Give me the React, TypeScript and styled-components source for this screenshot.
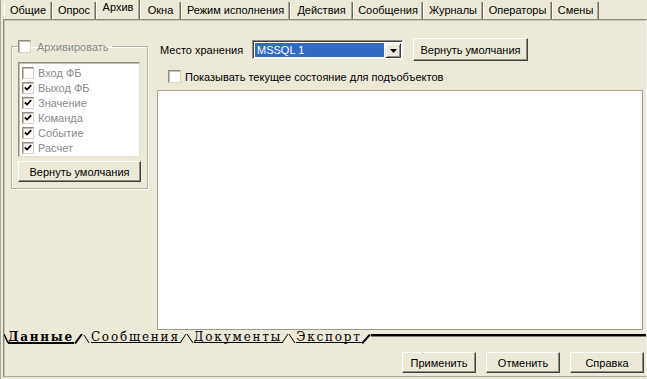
import React from 'react'
import styled, { createGlobalStyle } from 'styled-components'

const GlobalStyle = createGlobalStyle`
    html, body {
        margin: 0;
        padding: 0;
        background: #ece9d8;
    }
    body {
        font-family: "Liberation Sans", Arial, sans-serif;
        font-size: 11px;
        color: #000;
    }
`

const topTabs = [
    { label: 'Общие', width: 48 },
    { label: 'Опрос', width: 44 },
    { label: 'Архив', width: 44, active: true },
    { label: 'Окна', width: 41 },
    { label: 'Режим исполнения', width: 109 },
    { label: 'Действия', width: 63 },
    { label: 'Сообщения', width: 70 },
    { label: 'Журналы', width: 60 },
    { label: 'Операторы', width: 69 },
    { label: 'Смены', width: 47 },
]

const archiveItems = [
    { label: 'Вход ФБ', checked: false },
    { label: 'Выход ФБ', checked: true },
    { label: 'Значение', checked: true },
    { label: 'Команда', checked: true },
    { label: 'Событие', checked: true },
    { label: 'Расчет', checked: true },
]

function Tick() {
    return (
        <svg width="8" height="7" viewBox="0 0 8 7">
            <path d="M0.8 3.4 L3 5.6 L7.2 1.2" fill="none" stroke="#000" strokeWidth="1.7" />
        </svg>
    )
}

interface EdgeProps {
    width: number;
    lines: { x1: number; y1: number; x2: number; y2: number; w: number }[];
}

function TabEdge(props: EdgeProps): JSX.Element {
    return (
        <EdgeSvg width={props.width} height="10" viewBox={`0 0 ${props.width} 10`}>
            {props.lines.map((l, i) => (
                <line key={i} x1={l.x1} y1={l.y1} x2={l.x2} y2={l.y2} stroke="#000" strokeWidth={l.w} />
            ))}
        </EdgeSvg>
    )
}

export default function App(): JSX.Element {
    return (
        <Window>
            <GlobalStyle />
            <TabBar>
                {topTabs.map((t) => (
                    <Tab key={t.label} $width={t.width} $active={!!t.active}>
                        {t.label}
                    </Tab>
                ))}
            </TabBar>
            <Page>
                <Content>
                    <GroupBox>
                        <Legend>
                            <CheckBox $size={13} />
                            <DisabledLabel>Архивировать</DisabledLabel>
                        </Legend>
                        <ListBox>
                            {archiveItems.map((item) => (
                                <ListItem key={item.label}>
                                    <CheckBox $size={12}>{item.checked && <Tick />}</CheckBox>
                                    <DisabledLabel>{item.label}</DisabledLabel>
                                </ListItem>
                            ))}
                        </ListBox>
                        <Button $width={123} $height={21} $top={4}>
                            Вернуть умолчания
                        </Button>
                    </GroupBox>
                    <RightPanel>
                        <StorageRow>
                            <FieldLabel>Место хранения</FieldLabel>
                            <Select>
                                <SelectValue>MSSQL 1</SelectValue>
                                <DropButton>
                                    <svg width="7" height="4" viewBox="0 0 7 4">
                                        <path d="M0 0 H7 L3.5 4 Z" fill="#000" />
                                    </svg>
                                </DropButton>
                            </Select>
                            <Button $width={115} $height={23} $top={0} $left={10}>
                                Вернуть умолчания
                            </Button>
                        </StorageRow>
                        <OptionRow>
                            <CheckBox $size={13} />
                            <span>Показывать текущее состояние для подъобъектов</span>
                        </OptionRow>
                        <WhiteArea />
                    </RightPanel>
                </Content>
                <SheetTabs>
                    <TabEdge width={4} lines={[{ x1: 0, y1: 0, x2: 4, y2: 9, w: 1.4 }]} />
                    <SheetTab $active>Данные</SheetTab>
                    <TabEdge
                        width={17}
                        lines={[
                            { x1: 1, y1: 9.5, x2: 8, y2: 0, w: 2 },
                            { x1: 10, y1: 1, x2: 15, y2: 9, w: 1 },
                        ]}
                    />
                    <SheetTab>Сообщения</SheetTab>
                    <TabEdge
                        width={14}
                        lines={[
                            { x1: 0, y1: 9, x2: 6, y2: 0, w: 1 },
                            { x1: 7, y1: 0, x2: 13, y2: 9, w: 1 },
                        ]}
                    />
                    <SheetTab>Документы</SheetTab>
                    <TabEdge
                        width={14}
                        lines={[
                            { x1: 0, y1: 9, x2: 6, y2: 0, w: 1 },
                            { x1: 7, y1: 0, x2: 13, y2: 9, w: 1 },
                        ]}
                    />
                    <SheetTab>Экспорт</SheetTab>
                    <TabEdge width={9} lines={[{ x1: 0, y1: 9.5, x2: 8, y2: 0.5, w: 2 }]} />
                    <SheetFiller />
                </SheetTabs>
                <ButtonRow>
                    <Button $width={74} $height={21}>Применить</Button>
                    <Button $width={74} $height={21}>Отменить</Button>
                    <Button $width={74} $height={21}>Справка</Button>
                </ButtonRow>
            </Page>
        </Window>
    )
}

const Window = styled.div`
    width: 646px;
    height: 379px;
    border-left: 1px solid #aca899;
    background: #ece9d8;
    overflow: hidden;
`

const TabBar = styled.div`
    display: flex;
    height: 19px;
    padding-left: 3px;
    align-items: flex-end;
`

const Tab = styled.div<{ $width: number; $active: boolean }>`
    box-sizing: border-box;
    width: ${(p) => p.$width}px;
    height: ${(p) => (p.$active ? 19 : 17)}px;
    line-height: ${(p) => (p.$active ? 15 : 17)}px;
    text-align: center;
    white-space: nowrap;
    border-left: 1px solid #fff;
    border-right: 1px solid #716f64;
    box-shadow: inset -1px 0 0 #aca899;
`

const Page = styled.div`
    box-sizing: border-box;
    width: 644px;
    margin-left: 2px;
    display: flex;
    flex-direction: column;
    border-top: 1px solid #8b8878;
    border-left: 1px solid #8b8878;
    border-bottom: 1px solid #aca899;
    border-right: 1px solid #f7f6f0;
    box-shadow: inset 1px 1px 0 #c9c6b6;
`

const Content = styled.div`
    display: flex;
    align-items: flex-start;
    padding: 18px 0 0 7px;
`

const GroupBox = styled.fieldset`
    box-sizing: border-box;
    width: 137px;
    margin: 2px 0 0 0;
    padding: 0 6px 6px 6px;
    border: 1px solid #b5b2a2;
    box-shadow: inset 1px 1px 0 #fff, 1px 1px 0 #fff;
    min-width: 0;
`

const Legend = styled.legend`
    display: flex;
    align-items: center;
    gap: 6px;
    height: 13px;
    padding: 0 3px 0 0;
    margin: 0;
`

const DisabledLabel = styled.span`
    color: #8a8a8a;
    white-space: nowrap;
`

const CheckBox = styled.span<{ $size: number }>`
    box-sizing: border-box;
    width: ${(p) => p.$size}px;
    height: ${(p) => p.$size}px;
    flex: none;
    display: flex;
    align-items: center;
    justify-content: center;
    background: #fff;
    border: 1px solid;
    border-color: #8e8c80 #d8d5c8 #d8d5c8 #8e8c80;
    box-shadow: inset 1px 1px 0 #c4c1b3;
`

const ListBox = styled.div`
    box-sizing: border-box;
    width: 122px;
    height: 95px;
    margin-top: 9px;
    padding-top: 2px;
    background: #fff;
    border: 1px solid;
    border-color: #8e8c80 #e4e2d6 #e4e2d6 #8e8c80;
    box-shadow: inset 1px 1px 0 #c4c1b3;
`

const ListItem = styled.div`
    display: flex;
    align-items: center;
    gap: 4px;
    height: 15px;
    padding-left: 3px;
`

const Button = styled.button<{ $width: number; $height: number; $top?: number; $left?: number }>`
    box-sizing: border-box;
    width: ${(p) => p.$width}px;
    height: ${(p) => p.$height}px;
    margin: ${(p) => p.$top ?? 0}px 0 0 ${(p) => p.$left ?? 0}px;
    padding: 0;
    flex: none;
    font-family: "Liberation Sans", Arial, sans-serif;
    font-size: 11px;
    color: #000;
    background: #ece9d8;
    border: 1px solid;
    border-color: #fff #404040 #404040 #fff;
    box-shadow: inset -1px -1px 0 #8e8c80;
    white-space: nowrap;
`

const RightPanel = styled.div`
    width: 486px;
    margin-left: 9px;
    display: flex;
    flex-direction: column;
`

const StorageRow = styled.div`
    display: flex;
    align-items: center;
    height: 23px;
`

const FieldLabel = styled.span`
    box-sizing: border-box;
    width: 95px;
    padding-left: 3px;
    white-space: nowrap;
`

const Select = styled.div`
    box-sizing: border-box;
    width: 151px;
    height: 19px;
    display: flex;
    padding: 1px;
    background: #fff;
    border: 1px solid;
    border-color: #8e8c80 #fff #fff #8e8c80;
    box-shadow: inset 1px 1px 0 #404040;
`

const SelectValue = styled.div`
    flex: 1;
    margin: 1px 1px 0 1px;
    padding-left: 2px;
    background: #316ac5;
    color: #fff;
    line-height: 15px;
`

const DropButton = styled.div`
    box-sizing: border-box;
    width: 16px;
    height: 15px;
    margin-top: 1px;
    display: flex;
    align-items: center;
    justify-content: center;
    background: #ece9d8;
    border: 1px solid;
    border-color: #ece9d8 #404040 #404040 #ece9d8;
    box-shadow: inset 1px 1px 0 #fff, inset -1px -1px 0 #8e8c80;
`

const OptionRow = styled.div`
    display: flex;
    align-items: center;
    gap: 4px;
    height: 13px;
    margin-top: 9px;
    padding-left: 11px;
    white-space: nowrap;
`

const WhiteArea = styled.div`
    box-sizing: border-box;
    height: 240px;
    margin-top: 7px;
    background: #fff;
    border: 1px solid;
    border-color: #a6a394 #9d9a8b #9d9a8b #a6a394;
`

const SheetTabs = styled.div`
    display: flex;
    align-items: flex-start;
    height: 10px;
    margin-top: 4px;
`

const EdgeSvg = styled.svg`
    display: block;
    flex: none;
`

const SheetTab = styled.span<{ $active?: boolean }>`
    display: block;
    height: 8px;
    line-height: 7px;
    font-family: "DejaVu Serif", "Liberation Serif", serif;
    font-size: 12px;
    font-weight: ${(p) => (p.$active ? 'bold' : 'normal')};
    letter-spacing: ${(p) => (p.$active ? 1.7 : 1.8)}px;
    border-bottom: ${(p) => (p.$active ? 2 : 1)}px solid #000;
    white-space: nowrap;
`

const SheetFiller = styled.div`
    flex: 1;
    height: 2px;
    margin-top: 0;
    background: #000;
    box-shadow: 0 1px 0 #808080;
`

const ButtonRow = styled.div`
    display: flex;
    justify-content: flex-end;
    gap: 10px;
    margin-top: 8px;
    padding: 0 2px 3px 0;
`
